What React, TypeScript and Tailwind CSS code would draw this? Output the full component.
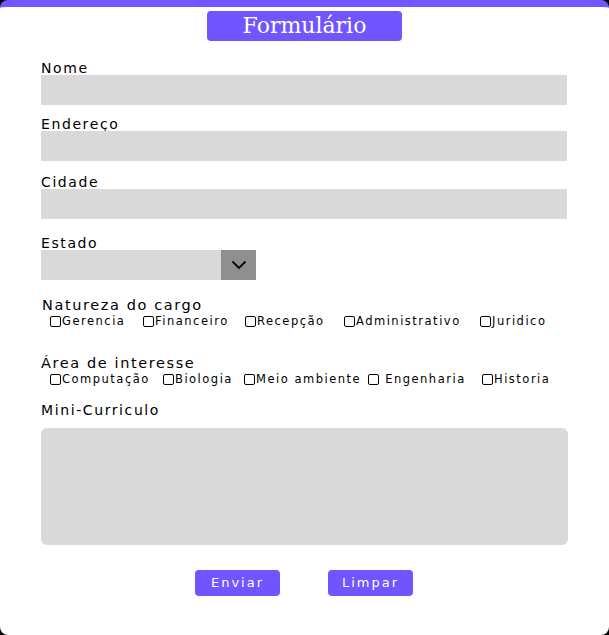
import React from "react";

const font = { fontFamily: '"DejaVu Sans", "Noto Sans", sans-serif' };

function Check({ label, w }: { label: string; w: string }) {
  return (
    <label className={`flex items-center ${w}`}>
      <span className="inline-block w-[11px] h-[11px] border border-black rounded-[2px] mr-[1px] shrink-0" />
      <span className="text-[11.5px] leading-[14px] tracking-[1.5px] text-black whitespace-pre">{label}</span>
    </label>
  );
}

export default function App() {
  return (
    <div className="w-[609px] h-[635px] bg-black" style={font}>
      <div className="w-full h-full bg-white rounded-[8px] overflow-hidden border-t-[7px] border-[#7155ff] flex flex-col">
        <div className="mx-auto mt-[4px] w-[195px] h-[30px] bg-[#7155ff] rounded-[4px] flex items-center justify-center">
          <span className="text-white text-[22px] leading-none" style={{ fontFamily: '"DejaVu Serif", "Liberation Serif", serif' }}>Formulário</span>
        </div>
        <div className="px-[41px] flex flex-col">
          <div className="mt-[20px] h-[14px] text-[14px] leading-[14px] tracking-[1.6px]">Nome</div>
          <div className="h-[30px] w-[526px] bg-[#d9d9d9]" />
          <div className="mt-[12px] h-[14px] text-[14px] leading-[14px] tracking-[1.6px]">Endereço</div>
          <div className="h-[30px] w-[526px] bg-[#d9d9d9]" />
          <div className="mt-[14px] h-[14px] text-[14px] leading-[14px] tracking-[1.6px]">Cidade</div>
          <div className="h-[30px] w-[526px] bg-[#d9d9d9]" />
          <div className="mt-[17px] h-[14px] text-[14px] leading-[14px] tracking-[1.6px]">Estado</div>
          <div className="h-[30px] w-[215px] bg-[#d9d9d9] flex justify-end">
            <div className="w-[35px] h-full bg-[#8f8f8f] flex items-center justify-center">
              <svg width="16" height="10" viewBox="0 0 16 10" fill="none">
                <path d="M1.5 1.5 L8 8 L14.5 1.5" stroke="black" strokeWidth="1.8" />
              </svg>
            </div>
          </div>
          <div className="mt-[18px] ml-[1px] h-[14px] text-[14.5px] leading-[14px] tracking-[1.6px]">Natureza do cargo</div>
          <div className="mt-[2px] ml-[9px] flex h-[14px]">
            <Check label="Gerencia" w="w-[93px]" />
            <Check label="Financeiro" w="w-[102px]" />
            <Check label="Recepção" w="w-[99px]" />
            <Check label="Administrativo" w="w-[136px]" />
            <Check label="Juridico" w="w-[80px]" />
          </div>
          <div className="mt-[28px] h-[14px] text-[14.5px] leading-[14px] tracking-[1.6px]">Área de interesse</div>
          <div className="mt-[2px] ml-[9px] flex h-[14px]">
            <Check label="Computação" w="w-[113px]" />
            <Check label="Biologia" w="w-[81px]" />
            <Check label="Meio ambiente" w="w-[124px]" />
            <Check label=" Engenharia" w="w-[114px]" />
            <Check label="Historia" w="w-[80px]" />
          </div>
          <div className="mt-[17px] h-[14px] text-[14px] leading-[14px] tracking-[1.6px]">Mini-Curriculo</div>
          <div className="mt-[11px] h-[117px] w-[527px] bg-[#d9d9d9] rounded-[6px]" />
          <div className="mt-[25px] pl-[154px] flex gap-[48px]">
            <button className="w-[85px] h-[26px] bg-[#7155ff] rounded-[4px] text-white text-[13px] tracking-[2px]">Enviar</button>
            <button className="w-[85px] h-[26px] bg-[#7155ff] rounded-[4px] text-white text-[13px] tracking-[2px]">Limpar</button>
          </div>
        </div>
      </div>
    </div>
  );
}
